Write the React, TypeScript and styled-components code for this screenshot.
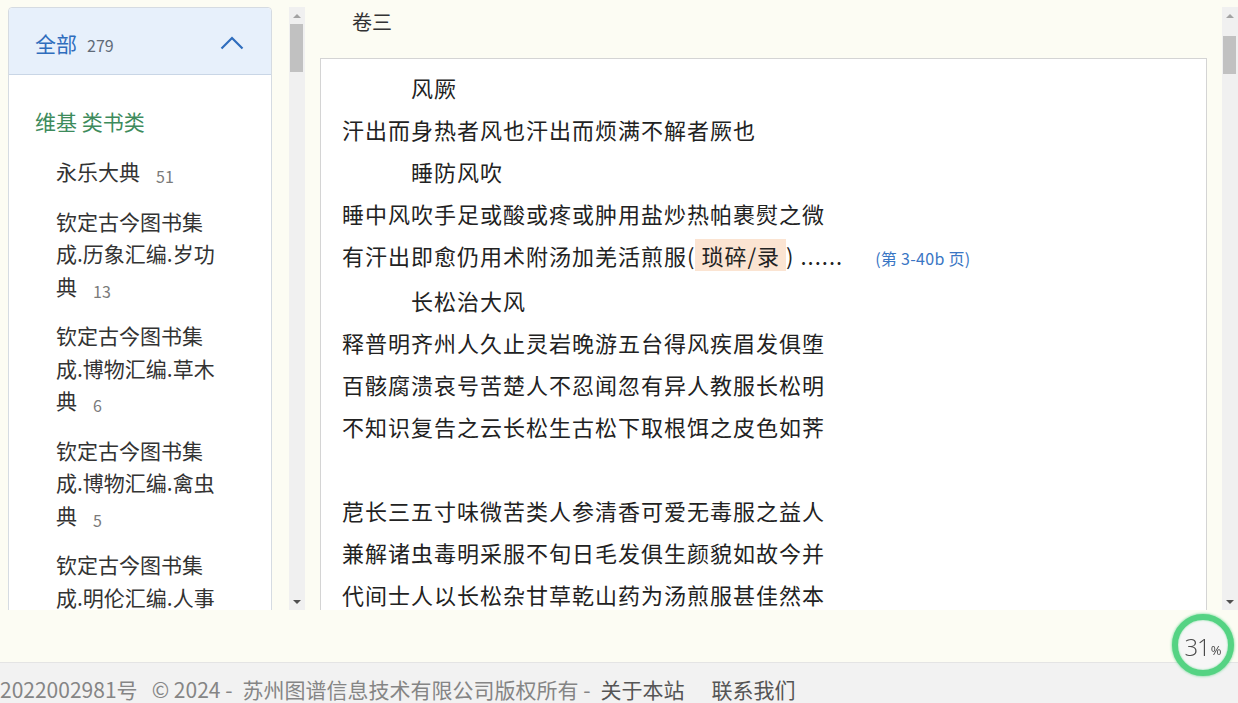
import React from 'react';
import styled, { createGlobalStyle } from 'styled-components';

const GlobalStyle = createGlobalStyle`
  html, body {
    margin: 0;
    padding: 0;
  }
  body {
    background: #fcfcf3;
    font-family: "Noto Sans CJK SC", "Microsoft YaHei", sans-serif;
    color: #333;
    overflow: hidden;
  }
`;

const Page = styled.div`
  width: 1238px;
  height: 703px;
  display: flex;
  flex-direction: column;
`;

const Main = styled.div`
  height: 610px;
  flex-shrink: 0;
  display: flex;
  overflow: hidden;
`;

const Sidebar = styled.aside`
  display: flex;
  gap: 17px;
  padding: 7px 0 0 8px;
`;

const Panel = styled.div`
  width: 264px;
  height: 720px;
  flex-shrink: 0;
  box-sizing: border-box;
  background: #fff;
  border: 1px solid #d5dbe2;
  border-radius: 4px 4px 0 0;
`;

const PanelHead = styled.div`
  height: 67px;
  box-sizing: border-box;
  display: flex;
  align-items: center;
  padding: 3px 27px 0 26px;
  background: #e7f0fb;
  border-bottom: 1px solid #c9d6e6;
  border-radius: 4px 4px 0 0;

  svg {
    margin-left: auto;
  }
`;

const HeadTitle = styled.span`
  font-size: 21px;
  color: #2f6dbd;
`;

const Count = styled.span<{ $big?: boolean }>`
  display: inline-block;
  font-size: 16px;
  line-height: 1;
  color: ${(p) => (p.$big ? '#5f6b78' : '#7a7a7a')};
  margin-left: ${(p) => (p.$big ? '10px' : '16px')};
  position: relative;
  top: ${(p) => (p.$big ? '2px' : '3px')};
`;

const List = styled.div`
  padding: 30px 0 0 26px;
`;

const GroupTitle = styled.div`
  font-size: 21px;
  line-height: 32px;
  color: #3d8b5c;
  margin-bottom: 18px;
`;

const Item = styled.div`
  width: 164px;
  padding-left: 21px;
  font-size: 21px;
  line-height: 32.5px;
  color: #333;
  margin-bottom: 17px;

  &:first-of-type {
    margin-bottom: 19px;
  }
`;

const Track = styled.div`
  width: 16px;
  height: 603px;
  flex-shrink: 0;
  display: flex;
  flex-direction: column;
  background: #f0f0f0;
`;

const TrackBody = styled.div`
  flex: 1;
`;

const Thumb = styled.div<{ $top: number; $len: number }>`
  margin: ${(p) => p.$top}px 0 0 1px;
  width: 13px;
  height: ${(p) => p.$len}px;
  background: #c1c1c1;
`;

const Arrow = styled.div<{ $down?: boolean }>`
  height: 17px;
  display: flex;
  align-items: center;
  justify-content: center;

  &::after {
    content: '';
    border-left: 4px solid transparent;
    border-right: 4px solid transparent;
    ${(p) =>
      p.$down ? 'border-top: 4px solid #505050;' : 'border-bottom: 4px solid #a3a3a3;'}
  }
`;

const Reader = styled.main`
  flex: 1;
  min-width: 0;
  display: flex;
  flex-direction: column;
  padding: 7px 15px 0 15px;
`;

const VolTitle = styled.div`
  font-size: 20px;
  line-height: 30px;
  color: #333;
  padding-left: 32px;
  margin-bottom: 21px;
`;

const TextBox = styled.div`
  flex: 1;
  background: #fff;
  border: 1px solid #d4d4d4;
  padding: 7px 21px;
  font-size: 22px;
  letter-spacing: 1px;
  line-height: 42px;
  color: #222;
`;

const Line = styled.div<{ $indent?: boolean; $gap?: number }>`
  white-space: nowrap;
  height: 42px;
  padding-left: ${(p) => (p.$indent ? '69px' : '0')};
  margin-top: ${(p) => p.$gap || 0}px;
`;

const Mark = styled.span`
  background: #fbe4d2;
  padding: 0 6px;
`;

const PageRef = styled.span`
  margin-left: 32px;
  font-size: 16px;
  letter-spacing: 0.3px;
  color: #3a76c4;
`;

const Footer = styled.footer`
  margin-top: auto;
  height: 41px;
  box-sizing: border-box;
  background: #f2f2f2;
  border-top: 1px solid #e4e4e4;
  padding-top: 12px;
  font-size: 21px;
  line-height: 28px;
  color: #858585;
  white-space: nowrap;
`;

const FootText = styled.span<{ $gap: number }>`
  margin-left: ${(p) => p.$gap}px;
`;

const FootLink = styled.span<{ $gap: number }>`
  color: #555;
  margin-left: ${(p) => p.$gap}px;
`;

const Progress = styled.div`
  position: fixed;
  left: 1172px;
  top: 614px;
  width: 62px;
  height: 62px;
  box-sizing: border-box;
  border-radius: 50%;
  border: 6px solid #55d383;
  box-shadow: 0 0 3px #55d383, inset 0 0 2px #7fdca0;
  background: #f6f6f6;
  display: flex;
  align-items: center;
  justify-content: center;
  padding-top: 2px;
  font-family: "Open Sans", "Liberation Sans", sans-serif;
  font-weight: 300;
  font-size: 24px;
  letter-spacing: -1px;
  color: #4a4a4a;

  small {
    font-size: 13px;
    margin-top: 7px;
    margin-left: 1px;
    letter-spacing: 0;
    font-weight: 400;
  }
`;

const items = [
  { name: '永乐大典', n: 51 },
  { name: '钦定古今图书集成.历象汇编.岁功典', n: 13 },
  { name: '钦定古今图书集成.博物汇编.草木典', n: 6 },
  { name: '钦定古今图书集成.博物汇编.禽虫典', n: 5 },
  { name: '钦定古今图书集成.明伦汇编.人事典', n: 4 },
];

const App: React.FC = () => (
  <Page>
    <GlobalStyle />
    <Main>
      <Sidebar>
        <Panel>
          <PanelHead>
            <HeadTitle>全部</HeadTitle>
            <Count $big>279</Count>
            <svg width="24" height="14" viewBox="0 0 24 14">
              <polyline points="1.5,12.5 12,2 22.5,12.5" fill="none" stroke="#2f6dbd" strokeWidth="2.2" />
            </svg>
          </PanelHead>
          <List>
            <GroupTitle>维基 类书类</GroupTitle>
            {items.map((it) => (
              <Item key={it.name}>
                {it.name}
                <Count>{it.n}</Count>
              </Item>
            ))}
          </List>
        </Panel>
        <Track>
          <Arrow />
          <TrackBody>
            <Thumb $top={0} $len={48} />
          </TrackBody>
          <Arrow $down />
        </Track>
      </Sidebar>

      <Reader>
        <VolTitle>卷三</VolTitle>
        <TextBox>
          <Line $indent>风厥</Line>
          <Line>汗出而身热者风也汗出而烦满不解者厥也</Line>
          <Line $indent>睡防风吹</Line>
          <Line>睡中风吹手足或酸或疼或肿用盐炒热帕裹熨之微</Line>
          <Line>
            有汗出即愈仍用术附汤加羌活煎服(<Mark>琐碎/录</Mark>) ......
            <PageRef>(第 3-40b 页)</PageRef>
          </Line>
          <Line $indent $gap={3}>长松治大风</Line>
          <Line>释普明齐州人久止灵岩晚游五台得风疾眉发俱堕</Line>
          <Line>百骸腐溃哀号苦楚人不忍闻忽有异人教服长松明</Line>
          <Line>不知识复告之云长松生古松下取根饵之皮色如荠</Line>
          <Line />
          <Line>苨长三五寸味微苦类人参清香可爱无毒服之益人</Line>
          <Line>兼解诸虫毒明采服不旬日毛发俱生颜貌如故今并</Line>
          <Line>代间士人以长松杂甘草乾山药为汤煎服甚佳然本</Line>
        </TextBox>
      </Reader>

      <Track style={{ marginTop: 7 }}>
        <Arrow />
        <TrackBody>
          <Thumb $top={12} $len={38} />
        </TrackBody>
        <Arrow $down />
      </Track>
    </Main>

    <Footer>
      2022002981号&nbsp;&nbsp; © 2024 -
      <FootText $gap={10}>苏州图谱信息技术有限公司版权所有 -</FootText>
      <FootLink $gap={10}>关于本站</FootLink>
      <FootLink $gap={27}>联系我们</FootLink>
    </Footer>

    <Progress>
      31<small>%</small>
    </Progress>
  </Page>
);

export default App;
